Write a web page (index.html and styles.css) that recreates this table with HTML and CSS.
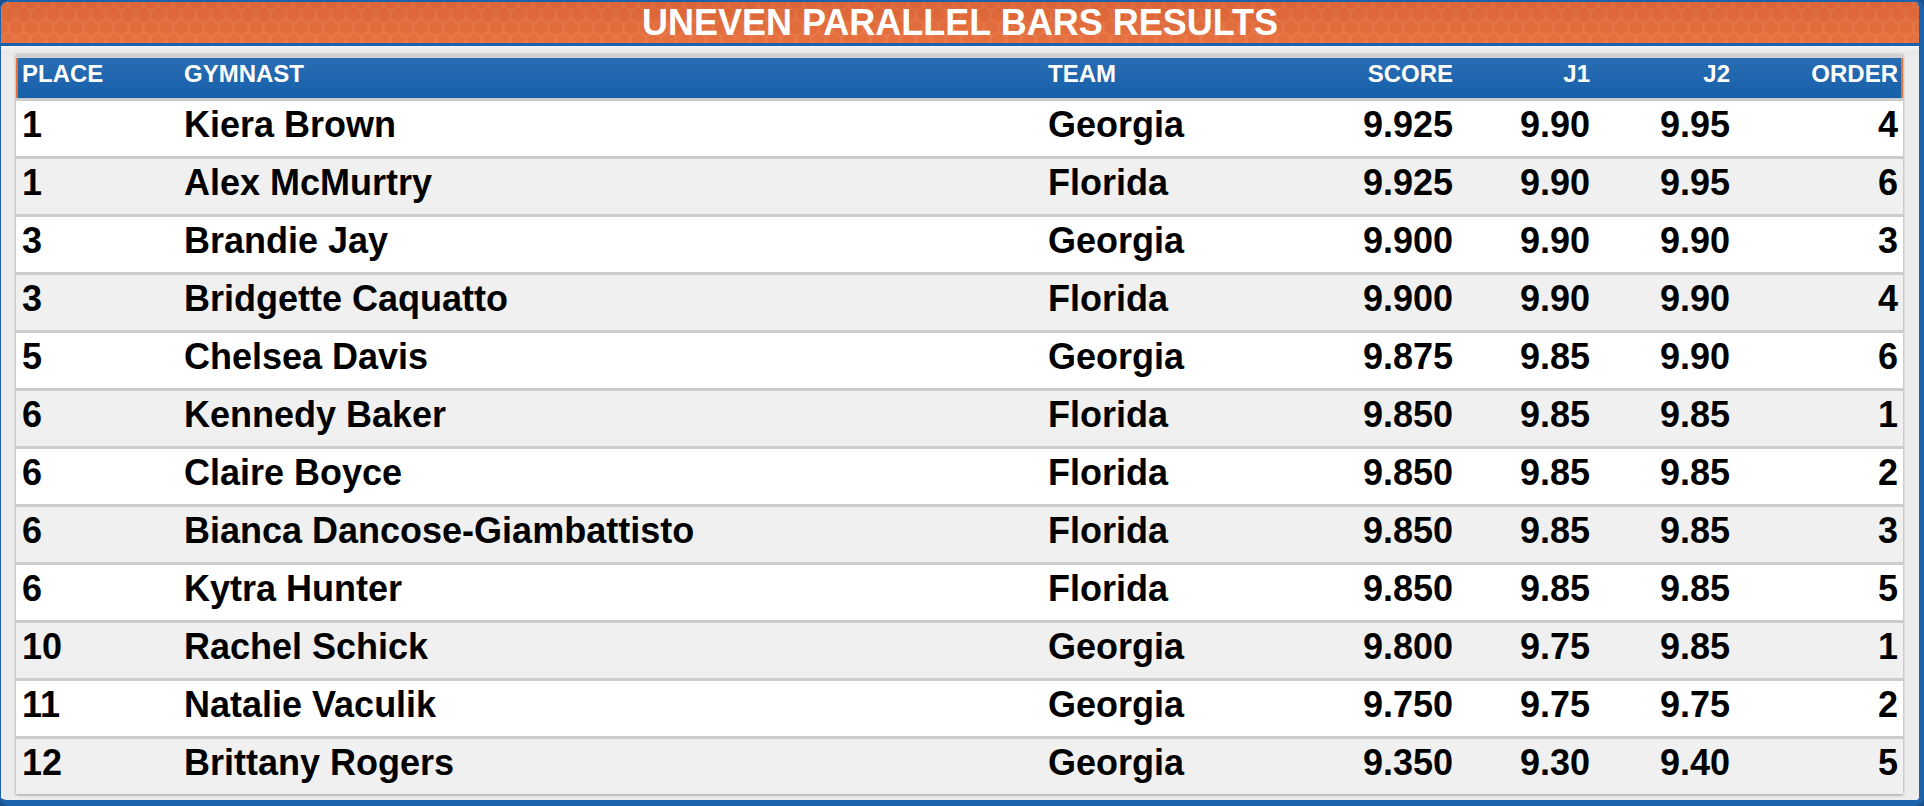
FILE: index.html
```html
<!DOCTYPE html>
<html lang="en">
<head>
<meta charset="utf-8">
<title>Uneven Parallel Bars Results</title>
<link rel="stylesheet" href="styles.css">
</head>
<body>
<div class="frame">
  <div class="titlebar">
    <svg class="hexes" width="100%" height="100%" aria-hidden="true">
      <defs>
        <pattern id="hex" width="15" height="26" patternUnits="userSpaceOnUse">
          <g fill="rgba(0,0,0,0.02)" stroke="rgba(255,255,255,0.06)" stroke-width="1.2">
            <polygon points="0,-7.9 6.8,-3.9 6.8,3.9 0,7.9 -6.8,3.9 -6.8,-3.9"/>
            <polygon points="15,-7.9 21.8,-3.9 21.8,3.9 15,7.9 8.2,3.9 8.2,-3.9"/>
            <polygon points="7.5,5.1 14.3,9.1 14.3,16.9 7.5,20.9 0.7,16.9 0.7,9.1"/>
            <polygon points="0,18.1 6.8,22.1 6.8,29.9 0,33.9 -6.8,29.9 -6.8,22.1"/>
            <polygon points="15,18.1 21.8,22.1 21.8,29.9 15,33.9 8.2,29.9 8.2,22.1"/>
          </g>
        </pattern>
      </defs>
      <rect width="100%" height="100%" fill="url(#hex)"/>
    </svg>
    <h1 class="title">UNEVEN PARALLEL BARS RESULTS</h1>
  </div>
  <div class="content">
    <div class="results">
      <div class="row head">
        <div>PLACE</div><div>GYMNAST</div><div>TEAM</div><div class="r">SCORE</div><div class="r">J1</div><div class="r">J2</div><div class="r">ORDER</div>
      </div>
      <div class="row data">
        <div>1</div><div>Kiera Brown</div><div>Georgia</div><div class="r">9.925</div><div class="r">9.90</div><div class="r">9.95</div><div class="r">4</div>
      </div>
      <div class="row data">
        <div>1</div><div>Alex McMurtry</div><div>Florida</div><div class="r">9.925</div><div class="r">9.90</div><div class="r">9.95</div><div class="r">6</div>
      </div>
      <div class="row data">
        <div>3</div><div>Brandie Jay</div><div>Georgia</div><div class="r">9.900</div><div class="r">9.90</div><div class="r">9.90</div><div class="r">3</div>
      </div>
      <div class="row data">
        <div>3</div><div>Bridgette Caquatto</div><div>Florida</div><div class="r">9.900</div><div class="r">9.90</div><div class="r">9.90</div><div class="r">4</div>
      </div>
      <div class="row data">
        <div>5</div><div>Chelsea Davis</div><div>Georgia</div><div class="r">9.875</div><div class="r">9.85</div><div class="r">9.90</div><div class="r">6</div>
      </div>
      <div class="row data">
        <div>6</div><div>Kennedy Baker</div><div>Florida</div><div class="r">9.850</div><div class="r">9.85</div><div class="r">9.85</div><div class="r">1</div>
      </div>
      <div class="row data">
        <div>6</div><div>Claire Boyce</div><div>Florida</div><div class="r">9.850</div><div class="r">9.85</div><div class="r">9.85</div><div class="r">2</div>
      </div>
      <div class="row data">
        <div>6</div><div>Bianca Dancose-Giambattisto</div><div>Florida</div><div class="r">9.850</div><div class="r">9.85</div><div class="r">9.85</div><div class="r">3</div>
      </div>
      <div class="row data">
        <div>6</div><div>Kytra Hunter</div><div>Florida</div><div class="r">9.850</div><div class="r">9.85</div><div class="r">9.85</div><div class="r">5</div>
      </div>
      <div class="row data">
        <div>10</div><div>Rachel Schick</div><div>Georgia</div><div class="r">9.800</div><div class="r">9.75</div><div class="r">9.85</div><div class="r">1</div>
      </div>
      <div class="row data">
        <div>11</div><div>Natalie Vaculik</div><div>Georgia</div><div class="r">9.750</div><div class="r">9.75</div><div class="r">9.75</div><div class="r">2</div>
      </div>
      <div class="row data">
        <div>12</div><div>Brittany Rogers</div><div>Georgia</div><div class="r">9.350</div><div class="r">9.30</div><div class="r">9.40</div><div class="r">5</div>
      </div>
    </div>
  </div>
</div>
</body>
</html>
```
FILE: styles.css
```css
html, body {
  margin: 0;
  padding: 0;
  width: 1924px;
  height: 806px;
  overflow: hidden;
  background: #1c4f88;
  font-family: "Liberation Sans", Arial, sans-serif;
}

.frame {
  box-sizing: border-box;
  width: 1924px;
  height: 806px;
  border-style: solid;
  border-color: #1b63ad;
  border-width: 2px 5px 6px 1px;
  border-radius: 9px;
  background: #ebebeb;
  overflow: hidden;
  display: flex;
  flex-direction: column;
}

.titlebar {
  position: relative;
  flex: none;
  height: 41px;
  border-bottom: 3px solid #1b63ad;
  background: linear-gradient(#dd6536, #ec7441);
  display: flex;
  align-items: center;
  justify-content: center;
}

.hexes {
  position: absolute;
  left: 0;
  top: 0;
}

.title {
  position: relative;
  margin: 0;
  color: #fff;
  font-weight: bold;
  font-size: 36px;
  line-height: 41px;
}

.content {
  flex: 1;
  padding: 8px 16px 0 15px;
  background: linear-gradient(#f5f5f5, #e6e6e6 8px, #ececec 9px);
}

.results {
  border-top: 4px solid #cfcfcf;
  background: #fff;
  box-shadow: 0 1px 3px rgba(0, 0, 0, 0.35);
}

.row {
  display: grid;
  grid-template-columns: 162px 864px 250px 155px 137px 140px 168px;
  padding: 0 5px 0 6px;
  align-items: start;
  white-space: nowrap;
}

.r {
  text-align: right;
}

.head {
  height: 40px;
  background: linear-gradient(#2a6db3, #1660aa);
  box-shadow: inset 2px 0 0 #e5703b, inset -2px 0 0 #e5703b;
  color: #fff;
  font-weight: bold;
  font-size: 24px;
  line-height: 32px;
}

.data {
  height: 55px;
  border-top: 3px solid #cccccc;
  background: #fff;
  color: #000;
  font-weight: bold;
  font-size: 36px;
  line-height: 47px;
}

.data:nth-child(odd) {
  background: #f0f0f0;
}
```
